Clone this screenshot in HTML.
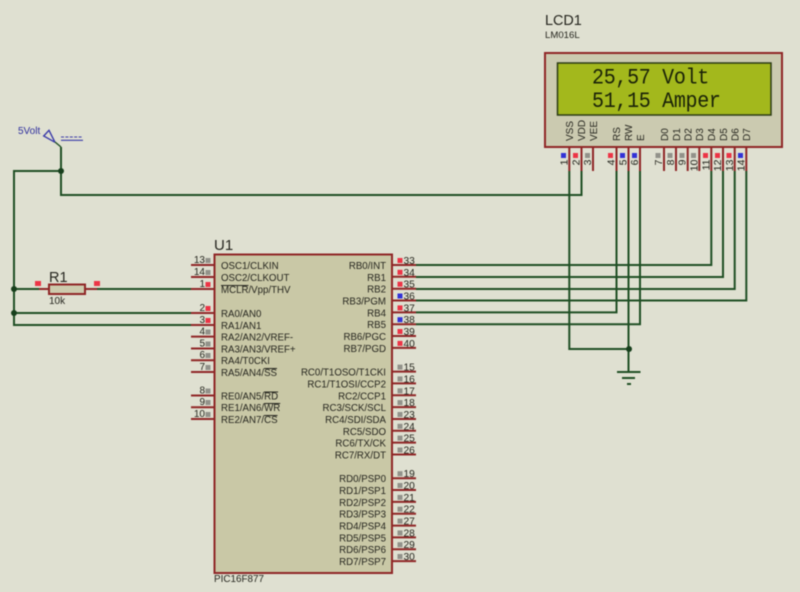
<!DOCTYPE html>
<html><head><meta charset="utf-8"><style>
html,body{margin:0;padding:0;background:#dfe0d1;width:800px;height:592px;overflow:hidden}
svg{display:block;filter:blur(.5px)}
text{font-family:"Liberation Sans",sans-serif;fill:#26261f}
.l{font-size:9.7px}
.r{font-size:9.7px;text-anchor:end}
.q{font-size:10px;text-anchor:end}
.n{font-size:10.200px}
.o{text-decoration:overline}
.w{stroke:#1f4f24;stroke-width:2;fill:none}
.p{stroke:#8f2626;stroke-width:2;fill:none}
.R{fill:#ec3446}.B{fill:#3232d6}.G{fill:#92928a}
rect.R,rect.B,rect.G{width:5px;height:5px}
.lcd{font-family:"Liberation Mono",monospace;font-size:20px;letter-spacing:-.3px;fill:#1a2208}
</style></head><body>
<svg width="800" height="592" viewBox="0 0 800 592" xmlns="http://www.w3.org/2000/svg">
<rect width="800" height="592" fill="#dfe0d1"/>

<!-- wires -->
<g class="w">
<path d="M61 147V195H581.5V171"/>
<path d="M61 171H14V325H191"/>
<path d="M14 289H39M97 289H191M14 313H191"/>
<path d="M569.3 171V349H629"/>
<path d="M628.5 171V372"/>
<path d="M416 265H711.3V171M416 277H723V171M416 289H734.7V171M416 300.5H746.3V171"/>
<path d="M416 312.4H616.5V171M416 324.2H640V171"/>
<path d="M617 372H640.5M622 378H635M627 384H631"/>
</g>
<g fill="#173f1c"><circle cx="61" cy="171" r="3"/><circle cx="14" cy="289" r="3"/><circle cx="14" cy="313" r="3"/><circle cx="629" cy="349" r="3"/></g>

<!-- terminal -->
<path d="M55 142.3L49 130.3L43.7 136L55 142.3" fill="none" stroke="#3a3aa8" stroke-width="1.400"/>
<path d="M61 147L55 142" stroke="#1f4f24" stroke-width="1.400"/>
<path d="M61 137H83" stroke="#3a3aa8" stroke-width="1" stroke-dasharray="3 1.400"/>
<path d="M61 140.300H83" stroke="#3a3aa8" stroke-width="1.200"/>
<text x="18" y="134" font-size="10" style="fill:#2f2f9e">5Volt</text>

<!-- resistor -->
<path class="p" d="M39 289H49M85 289H97"/>
<rect x="49" y="284.500" width="36" height="9.500" fill="#cdcbae" stroke="#8f2626" stroke-width="2"/>
<rect class="R" x="35" y="281" style="width:6px"/><rect class="R" x="94" y="281" style="width:6px"/>
<text x="49" y="282" font-size="14.500">R1</text>
<text x="49" y="304" font-size="10">10k</text>

<!-- chip -->
<rect x="214.500" y="254.500" width="177.500" height="318.500" fill="#c9c8a6" stroke="#8f2626" stroke-width="2"/>
<text x="214" y="250" font-size="15">U1</text>
<text x="214" y="582" font-size="9.900">PIC16F877</text>

<!-- left pins -->
<path class="p" d="M191 265H214M191 277H214M191 289H214M191 313H214M191 325H214M191 336.600H214M191 348.500H214M191 360.300H214M191 372H214M191 395.500H214M191 407.300H214M191 419H214"/>
<g>
<text class="q" x="205" y="263">13</text><text class="q" x="205" y="275">14</text><text class="q" x="205" y="287">1</text><text class="q" x="205" y="311">2</text><text class="q" x="205" y="323">3</text><text class="q" x="205" y="334.500">4</text><text class="q" x="205" y="346.500">5</text><text class="q" x="205" y="358">6</text><text class="q" x="205" y="370">7</text><text class="q" x="205" y="393.500">8</text><text class="q" x="205" y="405">9</text><text class="q" x="205" y="417">10</text>
</g>
<g>
<rect class="G" x="205.500" y="258"/><rect class="G" x="205.500" y="270"/><rect class="R" x="205.500" y="282"/><rect class="R" x="205.500" y="306"/><rect class="R" x="205.500" y="318"/><rect class="G" x="205.500" y="329.500"/><rect class="G" x="205.500" y="341.500"/><rect class="G" x="205.500" y="353"/><rect class="G" x="205.500" y="365"/><rect class="G" x="205.500" y="388.500"/><rect class="G" x="205.500" y="400"/><rect class="G" x="205.500" y="412"/>
</g>
<text class="l" x="221" y="269">OSC1/CLKIN</text>
<text class="l" x="221" y="281">OSC2/CLKOUT</text>
<text class="l" x="221" y="293"><tspan class="o">MCLR</tspan>/Vpp/THV</text>
<text class="l" x="221" y="317">RA0/AN0</text>
<text class="l" x="221" y="329">RA1/AN1</text>
<text class="l" x="221" y="340.500">RA2/AN2/VREF-</text>
<text class="l" x="221" y="352.500">RA3/AN3/VREF+</text>
<text class="l" x="221" y="364">RA4/T0CKI</text>
<text class="l" x="221" y="376">RA5/AN4/<tspan class="o">SS</tspan></text>
<text class="l" x="221" y="399.500">RE0/AN5/<tspan class="o">RD</tspan></text>
<text class="l" x="221" y="411">RE1/AN6/<tspan class="o">WR</tspan></text>
<text class="l" x="221" y="423">RE2/AN7/<tspan class="o">CS</tspan></text>

<!-- right pins -->
<path class="p" d="M392 265H416M392 276.800H416M392 288.700H416M392 300.500H416M392 312.400H416M392 324.200H416M392 336H416M392 347.900H416M392 371.600H416M392 383.400H416M392 395.300H416M392 407.100H416M392 419H416M392 430.800H416M392 442.600H416M392 454.500H416M392 478.200H416M392 490H416M392 501.900H416M392 513.700H416M392 525.600H416M392 537.400H416M392 549.200H416M392 561.100H416"/>
<g>
<text class="r" x="386" y="269">RB0/INT</text><text class="r" x="386" y="281">RB1</text><text class="r" x="386" y="292.700">RB2</text><text class="r" x="386" y="304.500">RB3/PGM</text><text class="r" x="386" y="316.400">RB4</text><text class="r" x="386" y="328.200">RB5</text><text class="r" x="386" y="340">RB6/PGC</text><text class="r" x="386" y="352">RB7/PGD</text>
<text class="r" x="386" y="375.600">RC0/T1OSO/T1CKI</text><text class="r" x="386" y="387.400">RC1/T1OSI/CCP2</text><text class="r" x="386" y="399.300">RC2/CCP1</text><text class="r" x="386" y="411">RC3/SCK/SCL</text><text class="r" x="386" y="423">RC4/SDI/SDA</text><text class="r" x="386" y="434.800">RC5/SDO</text><text class="r" x="386" y="446.600">RC6/TX/CK</text><text class="r" x="386" y="458.500">RC7/RX/DT</text>
<text class="r" x="386" y="482.200">RD0/PSP0</text><text class="r" x="386" y="494">RD1/PSP1</text><text class="r" x="386" y="505.900">RD2/PSP2</text><text class="r" x="386" y="517.700">RD3/PSP3</text><text class="r" x="386" y="529.600">RD4/PSP4</text><text class="r" x="386" y="541.400">RD5/PSP5</text><text class="r" x="386" y="553.200">RD6/PSP6</text><text class="r" x="386" y="565">RD7/PSP7</text>
</g>
<g>
<text class="n" x="403.500" y="264">33</text><text class="n" x="403.500" y="275.800">34</text><text class="n" x="403.500" y="287.700">35</text><text class="n" x="403.500" y="299.500">36</text><text class="n" x="403.500" y="311.400">37</text><text class="n" x="403.500" y="323.200">38</text><text class="n" x="403.500" y="335">39</text><text class="n" x="403.500" y="346.900">40</text>
<text class="n" x="403.500" y="370.600">15</text><text class="n" x="403.500" y="382.400">16</text><text class="n" x="403.500" y="394.300">17</text><text class="n" x="403.500" y="406.100">18</text><text class="n" x="403.500" y="418">23</text><text class="n" x="403.500" y="429.800">24</text><text class="n" x="403.500" y="441.600">25</text><text class="n" x="403.500" y="453.500">26</text>
<text class="n" x="403.500" y="477.200">19</text><text class="n" x="403.500" y="489">20</text><text class="n" x="403.500" y="500.900">21</text><text class="n" x="403.500" y="512.700">22</text><text class="n" x="403.500" y="524.600">27</text><text class="n" x="403.500" y="536.400">28</text><text class="n" x="403.500" y="548.200">29</text><text class="n" x="403.500" y="560">30</text>
</g>
<g>
<rect class="R" x="397.500" y="258"/><rect class="R" x="397.500" y="269.800"/><rect class="R" x="397.500" y="281.700"/><rect class="B" x="397.500" y="293.500"/><rect class="R" x="397.500" y="305.400"/><rect class="B" x="397.500" y="317.200"/><rect class="R" x="397.500" y="329"/><rect class="R" x="397.500" y="340.900"/>
<rect class="G" x="397.500" y="364.600"/><rect class="G" x="397.500" y="376.400"/><rect class="G" x="397.500" y="388.300"/><rect class="G" x="397.500" y="400.100"/><rect class="G" x="397.500" y="412"/><rect class="G" x="397.500" y="423.800"/><rect class="G" x="397.500" y="435.600"/><rect class="G" x="397.500" y="447.500"/>
<rect class="G" x="397.500" y="471.200"/><rect class="G" x="397.500" y="483"/><rect class="G" x="397.500" y="494.900"/><rect class="G" x="397.500" y="506.700"/><rect class="G" x="397.500" y="518.600"/><rect class="G" x="397.500" y="530.400"/><rect class="G" x="397.500" y="542.200"/><rect class="G" x="397.500" y="554"/>
</g>

<!-- LCD -->
<text x="545" y="25" font-size="14.400">LCD1</text>
<text x="545" y="38" font-size="9.600">LM016L</text>
<path class="p" d="M569.300 147V171M581.500 147V171M593 147V171M616.500 147V171M628.500 147V171M640 147V171M664 147V171M676 147V171M687.700 147V171M699.300 147V171M711.300 147V171M723 147V171M734.700 147V171M746.300 147V171"/>
<rect x="545" y="53" width="237" height="94" fill="#cbcab0" stroke="#8f2626" stroke-width="2"/>
<rect x="557.500" y="63" width="213.500" height="52" fill="#a3b81c" stroke="#2b3a14" stroke-width="1.500"/>
<text class="lcd" transform="translate(592 83.500) scale(1 1.120)">25,57 Volt</text>
<text class="lcd" transform="translate(592 107) scale(1 1.120)">51,15 Amper</text>

<g font-size="10">
<text transform="translate(573 141) rotate(-90)">VSS</text>
<text transform="translate(585 141) rotate(-90)">VDD</text>
<text transform="translate(597 141) rotate(-90)">VEE</text>
<text transform="translate(620 141) rotate(-90)">RS</text>
<text transform="translate(632 141) rotate(-90)">RW</text>
<text transform="translate(644 141) rotate(-90)">E</text>
<text transform="translate(668 141) rotate(-90)">D0</text>
<text transform="translate(680 141) rotate(-90)">D1</text>
<text transform="translate(691.500 141) rotate(-90)">D2</text>
<text transform="translate(703 141) rotate(-90)">D3</text>
<text transform="translate(715 141) rotate(-90)">D4</text>
<text transform="translate(727 141) rotate(-90)">D5</text>
<text transform="translate(738.500 141) rotate(-90)">D6</text>
<text transform="translate(750 141) rotate(-90)">D7</text>
</g>
<g font-size="10.500">
<text text-anchor="end" transform="translate(567.500 159.500) rotate(-90)">1</text>
<text text-anchor="end" transform="translate(579.500 159.500) rotate(-90)">2</text>
<text text-anchor="end" transform="translate(591 159.500) rotate(-90)">3</text>
<text text-anchor="end" transform="translate(614.500 159.500) rotate(-90)">4</text>
<text text-anchor="end" transform="translate(626.500 159.500) rotate(-90)">5</text>
<text text-anchor="end" transform="translate(638 159.500) rotate(-90)">6</text>
<text text-anchor="end" transform="translate(662 159.500) rotate(-90)">7</text>
<text text-anchor="end" transform="translate(674 159.500) rotate(-90)">8</text>
<text text-anchor="end" transform="translate(685.500 159.500) rotate(-90)">9</text>
<text text-anchor="end" transform="translate(697.500 159.500) rotate(-90)">10</text>
<text text-anchor="end" transform="translate(709.500 159.500) rotate(-90)">11</text>
<text text-anchor="end" transform="translate(721 159.500) rotate(-90)">12</text>
<text text-anchor="end" transform="translate(733 159.500) rotate(-90)">13</text>
<text text-anchor="end" transform="translate(744.500 159.500) rotate(-90)">14</text>
</g>
<g>
<rect class="B" x="561" y="153"/><rect class="R" x="573" y="153"/><rect class="G" x="585" y="153"/><rect class="R" x="608" y="153"/><rect class="B" x="620" y="153"/><rect class="B" x="632" y="153"/><rect class="G" x="655.500" y="153"/><rect class="G" x="667.500" y="153"/><rect class="G" x="679.500" y="153"/><rect class="G" x="691" y="153"/><rect class="R" x="703" y="153"/><rect class="R" x="715" y="153"/><rect class="R" x="726.500" y="153"/><rect class="B" x="738" y="153"/>
</g>
</svg>
</body></html>
